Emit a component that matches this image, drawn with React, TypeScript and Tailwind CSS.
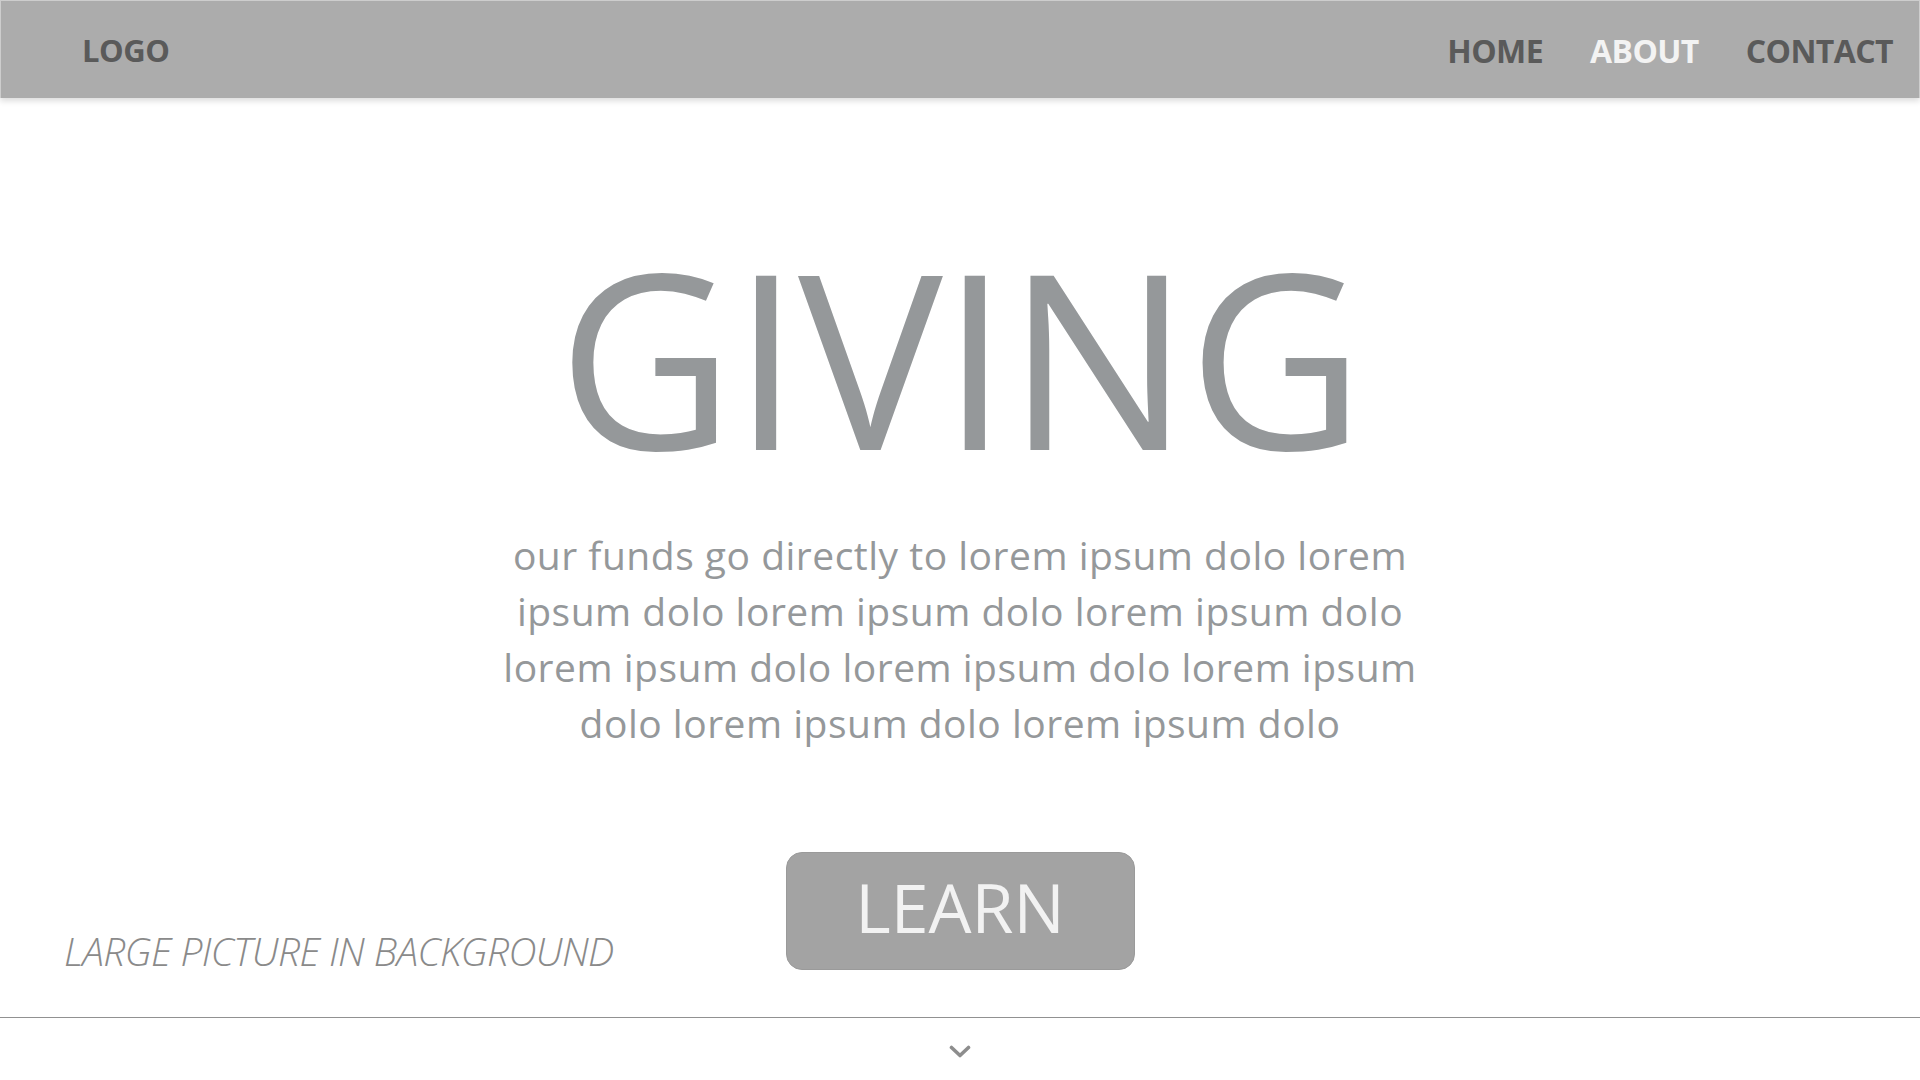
import React from "react";

const navLinks = [
  { label: "HOME", active: false },
  { label: "ABOUT", active: true },
  { label: "CONTACT", active: false },
];

const bodyLines = [
  "our funds go directly to lorem ipsum dolo lorem",
  "ipsum dolo lorem ipsum dolo lorem ipsum dolo",
  "lorem ipsum dolo lorem ipsum dolo lorem ipsum",
  "dolo lorem ipsum dolo lorem ipsum dolo",
];

function Header() {
  return (
    <header className="flex h-[98px] shrink-0 items-center justify-between border-x border-t border-[#cdcdcd] bg-[#acacac] pl-[81px] pr-[26px] shadow-[0_3px_6px_rgba(0,0,0,0.14)]">
      <span className="pt-[2px] text-[31px] font-bold tracking-[-0.5px] text-[#5a5a5a]">LOGO</span>
      <nav className="flex items-center gap-[47px] pt-[2px]">
        {navLinks.map((link) => (
          <a
            key={link.label}
            href="#"
            className={
              link.active
                ? "text-[32px] font-bold tracking-[-0.6px] text-[#f3f3f3]"
                : "text-[32px] font-bold tracking-[-0.6px] text-[#5a5a5a]"
            }
          >
            {link.label}
          </a>
        ))}
      </nav>
    </header>
  );
}

function Chevron() {
  return (
    <svg width="22" height="14" viewBox="0 0 22 14" fill="none" aria-hidden="true">
      <path d="M2.5 2.5 L11 10.5 L19.5 2.5" stroke="#8d8d8d" strokeWidth="3.6" strokeLinecap="round" strokeLinejoin="round" />
    </svg>
  );
}

export default function App() {
  return (
    <div
      className="flex h-[1080px] w-full flex-col overflow-hidden bg-white"
      style={{ fontFamily: '"Open Sans", "Noto Sans", "Liberation Sans", sans-serif' }}
    >
      <Header />

      <main className="flex flex-1 flex-col items-center pt-[136px]">
        <h1 className="text-[243px] font-normal leading-none tracking-[-2px] text-[#95989a]">GIVING</h1>

        <p className="mt-[50px] text-center text-[39px] font-normal leading-[56px] tracking-[0.5px] text-[#95989a]">
          {bodyLines.map((line, i) => (
            <React.Fragment key={i}>
              {line}
              {i < bodyLines.length - 1 && <br />}
            </React.Fragment>
          ))}
        </p>

        <div className="mt-auto mb-[47px] grid w-full grid-cols-[1fr_auto_1fr] items-end">
          <p className="pl-[64px] text-[39px] font-light italic leading-none tracking-[-0.6px] text-[#8a8a8a]">
            LARGE PICTURE IN BACKGROUND
          </p>
          <button
            type="button"
            className="flex h-[118px] w-[349px] items-center justify-center rounded-[16px] border border-[#9a9a9a] bg-[#a3a3a3] pb-[8px] text-[68px] font-normal text-[#f2f2f2]"
          >
            LEARN
          </button>
          <div />
        </div>
      </main>

      <footer className="flex h-[63px] shrink-0 justify-center border-t border-[#919191] pt-[27px]">
        <Chevron />
      </footer>
    </div>
  );
}
